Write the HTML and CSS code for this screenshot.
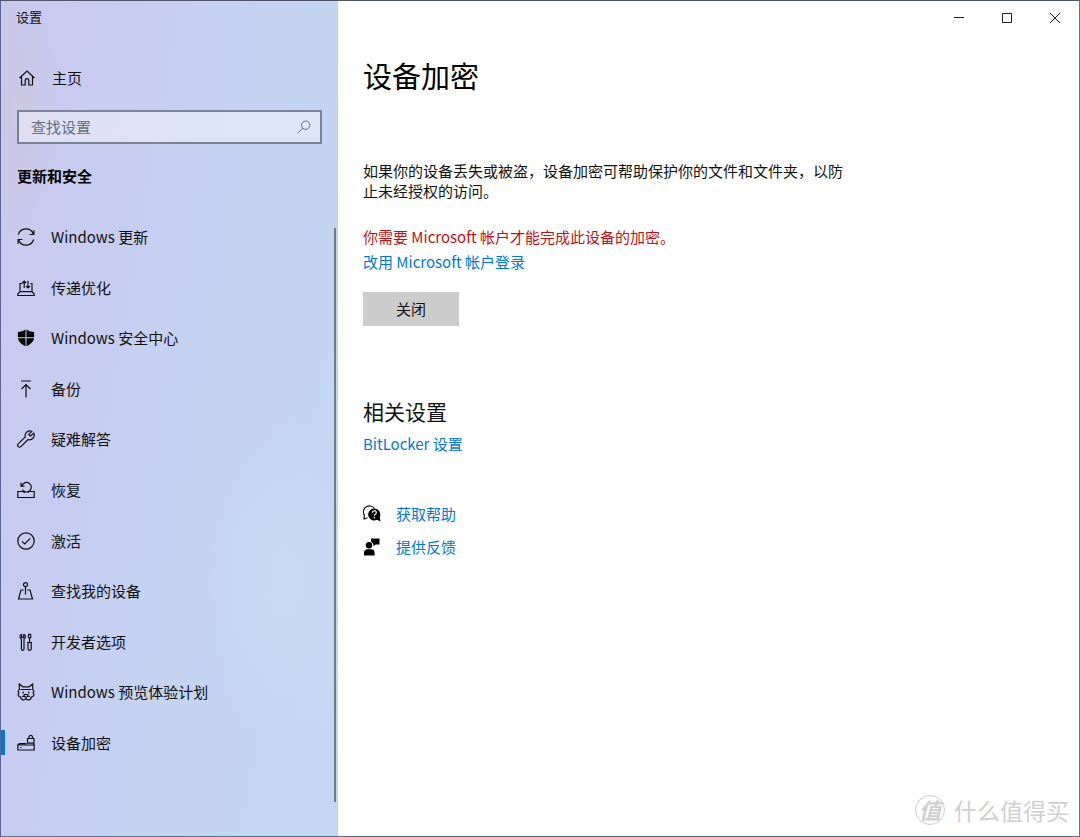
FILE: index.html
```html
<!DOCTYPE html>
<html lang="zh-CN">
<head>
<meta charset="utf-8">
<meta name="viewport" content="width=device-width, initial-scale=1">
<title>设置</title>
<link rel="stylesheet" href="styles.css">
</head>
<body>
<div class="window">
  <aside class="sidebar">
    <div class="app-title">设置</div>
    <a class="nav-link home" href="#home">
      <svg class="icon" viewBox="0 0 18 18"><path d="M1.500 9 9 2l7.500 7M3.500 7.500V16h3.700v-4.500a1.800 1.800 0 0 1 3.600 0V16h3.700V7.500"/></svg>
      <span>主页</span>
    </a>
    <form class="search">
      <input class="search-input" type="search" placeholder="查找设置" aria-label="查找设置">
      <button class="search-button" type="button" aria-label="搜索">
        <svg class="search-icon" viewBox="0 0 14 14"><circle cx="8.700" cy="5.200" r="4.200"/><path d="M5.700 8.200.700 13.300"/></svg>
      </button>
    </form>
    <h2 class="section-title">更新和安全</h2>
    <nav class="nav">
      <a class="nav-link" href="#update">
        <svg class="icon" viewBox="0 0 18 18"><path d="M1.300 6.500A8 8 0 0 1 16.400 6M16.700 11.500A8 8 0 0 1 1.600 12M16.900 2.200v4.300h-4.300M1.100 15.800v-4.300h4.300"/></svg>
        <span>Windows 更新</span>
      </a>
      <a class="nav-link" href="#delivery">
        <svg class="icon" viewBox="0 0 18 18"><path d="M5.200 4.500H3v8.200L.800 15v1.500h16.400V15L15 12.700V4.500h-1.500M3 12.700h12M7.200 9V2M5.200 4l2-2 2 2M11 1.800V9M9 7l2 2 2-2"/></svg>
        <span>传递优化</span>
      </a>
      <a class="nav-link" href="#security">
        <svg class="icon" viewBox="0 0 18 18"><path class="solid" d="M8.500.600v7.700H.900V3C4 3 6.500 2 8.500.600zM9.500.600C11.500 2 14 3 17.100 3v5.300H9.500zM1 9.200h7.500v8C4.500 15.500 1.500 12.500 1 9.200zM9.500 9.200H17c-.5 3.300-3.500 6.300-7.500 8z"/></svg>
        <span>Windows 安全中心</span>
      </a>
      <a class="nav-link" href="#backup">
        <svg class="icon" viewBox="0 0 18 18"><path d="M4 1h10M9 17.500V4.500M4.500 9 9 4.500 13.500 9"/></svg>
        <span>备份</span>
      </a>
      <a class="nav-link" href="#troubleshoot">
        <svg class="icon" viewBox="0 0 18 18"><path d="M14.800 1.500a4.600 4.600 0 0 0-6.500 5.300L1.200 13.900a1.800 1.800 0 0 0 2.700 2.700l7.200-7.100a4.600 4.600 0 0 0 5.700-6.200L13.400 6 11.700 4.400z"/></svg>
        <span>疑难解答</span>
      </a>
      <a class="nav-link" href="#recovery">
        <svg class="icon" viewBox="0 0 18 18"><path d="M5.800 10.500H.800v6h16.400v-6h-5M5.300 8.500a4.800 4.800 0 1 0-.3-4M4 1.800v3.400h3.500M5.800 10.500l2 1.200M12.200 10.500l-1.500 1"/></svg>
        <span>恢复</span>
      </a>
      <a class="nav-link" href="#activation">
        <svg class="icon" viewBox="0 0 18 18"><circle cx="9" cy="9" r="8.200"/><path d="m5 9.300 2.700 2.700 5.600-5.700"/></svg>
        <span>激活</span>
      </a>
      <a class="nav-link" href="#find">
        <svg class="icon" viewBox="0 0 18 18"><circle cx="8.500" cy="2.700" r="2"/><path d="M8.500 4.700v7.800M6.700 8H4L1.500 17h14L13 8h-2.700"/></svg>
        <span>查找我的设备</span>
      </a>
      <a class="nav-link" href="#developers">
        <svg class="icon" viewBox="0 0 18 18"><path d="M4.700 1.200v3.300h2V1.200M4.700 1.200A2.600 2.600 0 0 0 4.400 6v10a1.300 1.300 0 0 0 2.600 0V6a2.600 2.600 0 0 0-.3-4.800M10 9.500h5M11 9.500v6.300a1.600 1.600 0 0 0 3.200 0V9.500M12.600 9.500v-4l-1.300-1.500.3-2.700h2l.3 2.700-1.300 1.500"/></svg>
        <span>开发者选项</span>
      </a>
      <a class="nav-link" href="#insider">
        <svg class="icon" viewBox="0 0 18 18"><path d="M2.300 7V1L6 3.800h6L15.700 1v6M2.300 6.500 1 8.500l1 1.500-1 1.500 1 2 1.500.5c.5 2 2 3 3.500 3l2-1 2 1c1.500 0 3-1 3.500-3l1.500-.5 1-2-1-1.500 1-1.500-1.300-2M3.500 6.500h11M6.200 8.500v2M11.800 8.500v2M7.200 11.500h3.600v1.700L9 14.500l-1.800-1.300zM9 14.500V16M5 13.500l2.200-.3M13 13.500l-2.200-.3"/></svg>
        <span>Windows 预览体验计划</span>
      </a>
      <a class="nav-link current" href="#encryption" aria-current="page">
        <svg class="icon" viewBox="0 0 18 18"><path d="M9.500 9.700H2.200L.800 11v5h16.400v-5l-.7-1.300M.800 11h16.400M3 13.500h1.500M10.500 4.500H17v4.700h-6.500zM12 4.500V2.700a1.800 1.800 0 0 1 3.500 0v1.800"/></svg>
        <span>设备加密</span>
      </a>
    </nav>
    <div class="scroll-thumb"></div>
  </aside>
  <main class="content">
    <div class="caption-bar">
      <button class="caption-button" type="button" aria-label="最小化"><svg class="caption-icon" viewBox="0 0 12 12"><path d="M1 5.500h10"/></svg></button>
      <button class="caption-button" type="button" aria-label="最大化"><svg class="caption-icon" viewBox="0 0 12 12"><path d="M1.500 1.500h9v9h-9z"/></svg></button>
      <button class="caption-button" type="button" aria-label="关闭窗口"><svg class="caption-icon" viewBox="0 0 12 12"><path d="m1 1 10 10M11 1 1 11"/></svg></button>
    </div>
    <div class="page">
      <h1 class="page-title">设备加密</h1>
      <p class="description">如果你的设备丢失或被盗，设备加密可帮助保护你的文件和文件夹，以防止未经授权的访问。</p>
      <p class="warning">你需要 Microsoft 帐户才能完成此设备的加密。</p>
      <a class="link" href="#signin">改用 Microsoft 帐户登录</a>
      <button class="action" type="button">关闭</button>
      <h2 class="related-title">相关设置</h2>
      <a class="link" href="#bitlocker">BitLocker 设置</a>
      <div class="support">
        <a class="support-link" href="#help">
          <svg class="icon" viewBox="0 0 18 18"><path d="M.800 14.300 1.500 10.500A5.600 5.600 0 1 1 11.500 3.500M.800 14.300 4.500 12.800"/><path class="solid" d="M11.300 3.500a6 6 0 1 0 2.700 11.300l3.500 1.700-.8-4.300a6 6 0 0 0-5.400-8.700z"/><path class="mark" d="M9.500 7.700a1.900 1.900 0 1 1 2.800 1.600c-.7.400-.9.700-.9 1.500M11.400 12v1.500"/></svg>
          <span>获取帮助</span>
        </a>
        <a class="support-link" href="#feedback">
          <svg class="icon" viewBox="0 0 18 18"><circle class="solid" cx="6" cy="7.200" r="3.200"/><path class="solid" d="M1 17.500v-2.700C1 12.600 2.500 11.300 4.500 11.300h3.600c2 0 3.500 1.300 3.500 3.500v2.700zM8 .500h8.500v6h-3.800L10.500 8.300V6.500C10 5.300 9 4 8 3.700z"/></svg>
          <span>提供反馈</span>
        </a>
      </div>
    </div>
  </main>
  <div class="watermark"><span class="watermark-badge">值</span><span>什么值得买</span></div>
</div>
</body>
</html>
```
FILE: styles.css
```css
* { box-sizing: border-box; }

body {
  margin: 0;
  color: #111;
  font: 15px/20px "Noto Sans CJK SC", sans-serif;
}

h1, h2, p { margin: 0; font-weight: 400; }
a { color: inherit; text-decoration: none; }
button, input { font: inherit; color: inherit; }
button { padding: 0; border: 0; background: none; }

.window {
  position: relative;
  display: grid;
  grid-template-columns: 337px 1fr;
  min-height: 100vh;
  border: 1px solid;
  border-color: #50546a #568080 #53708c #5c639a;
  background: #fff;
}

.sidebar {
  position: relative;
  display: flex;
  flex-direction: column;
  padding-bottom: 68px;
  background:
    radial-gradient(ellipse 60px 130px at 0 110px, #cbc8df, transparent),
    radial-gradient(ellipse 100px 180px at 84% 580px, #c6daf1, transparent),
    linear-gradient(100deg, #c9c8ed 0%, #c6cdf0 32%, #c5d3f0 58%, #c3d8f0 100%);
}

.app-title {
  padding: 6px 15px 1px;
  font-size: 13px;
}

.icon {
  flex: none;
  width: 18px;
  height: 18px;
  fill: none;
  stroke: #111;
  stroke-width: 1.2;
}

.solid { fill: #000; stroke: none; }
.mark { stroke: #fff; }

.nav-link {
  display: flex;
  align-items: center;
  gap: 16px;
  padding: 0 16px;
}

.home { height: 40px; margin-top: 30px; padding: 0 17px; }

.search {
  display: flex;
  height: 34px;
  margin: 12px 16px 0;
  border: 2px solid #7b8399;
  background: rgb(255 255 255 / 42%);
}

.search-input {
  flex: 1;
  min-width: 0;
  padding: 0 12px;
  border: 0;
  outline: 0;
  background: none;
}

.search-input::placeholder { color: #686c7c; opacity: 1; }
.search-button { width: 32px; }

.search-icon {
  display: block;
  width: 14px;
  height: 14px;
  margin: auto;
  fill: none;
  stroke: #686c7c;
}

.section-title {
  margin: 22px 16px 26px;
  font-size: 15px;
  font-weight: 700;
  color: #000;
}

.nav {
  flex: 1;
  display: grid;
  grid-auto-rows: 1fr;
}

.current { position: relative; }

.current::before {
  content: "";
  position: absolute;
  left: 0;
  width: 4px;
  height: 25px;
  background: #0078d7;
}

.scroll-thumb {
  position: absolute;
  top: 227px;
  right: 2px;
  bottom: 34px;
  width: 2px;
  background: #747980;
}

.caption-bar { display: flex; justify-content: flex-end; }
.caption-button { width: 48px; height: 34px; }

.caption-icon {
  display: block;
  width: 12px;
  height: 12px;
  margin: auto;
  fill: none;
  stroke: #222;
}

.page {
  display: flex;
  flex-direction: column;
  align-items: flex-start;
  padding: 20px 25px;
}

.page-title {
  font-size: 29px;
  line-height: 40px;
  color: #000;
}

.description { max-width: 484px; margin-top: 66px; }
.warning { margin: 26px 0 5px; color: #c50f14; }
.link, .support-link { color: #0078d7; }

.action {
  width: 96px;
  height: 34px;
  margin: 20px 0 70px;
  background: #ccc;
}

.related-title {
  margin-bottom: 8px;
  font-size: 21px;
  line-height: 30px;
}

.support { display: grid; gap: 13px; margin-top: 50px; }
.support-link { display: flex; align-items: center; gap: 15px; }

.watermark {
  position: absolute;
  right: 10px;
  bottom: 10px;
  display: flex;
  align-items: center;
  gap: 9px;
  font-size: 23px;
  line-height: 32px;
  color: #d0d0d0;
}

.watermark-badge {
  width: 30px;
  height: 30px;
  border: 1px solid #d0d0d0;
  border-radius: 50%;
  font-size: 22px;
  font-style: italic;
  font-weight: 700;
  line-height: 27px;
  text-align: center;
}
```
